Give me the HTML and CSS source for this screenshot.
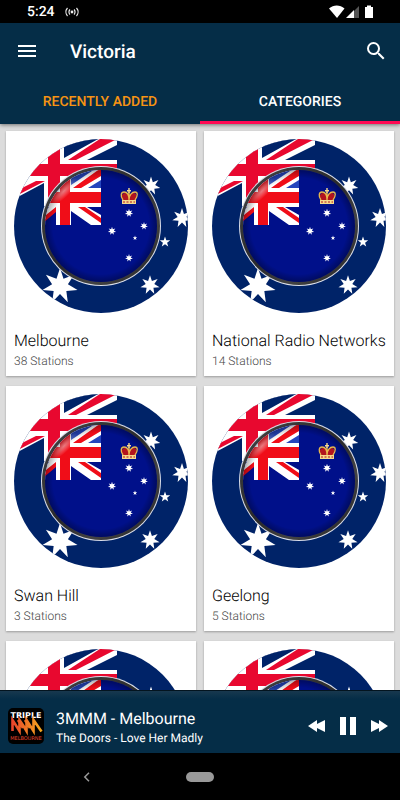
FILE: index.html
```html
<!DOCTYPE html>
<html lang="en">
<head>
  <meta charset="UTF-8">
  <meta name="viewport" content="width=device-width, initial-scale=1">
  <title>Victoria</title>
  <link rel="stylesheet" href="styles.css">
</head>
<body>
  <!-- shared artwork -->
  <svg class="defs" width="0" height="0" aria-hidden="true">
    <defs>
      <clipPath id="outer"><circle cx="87" cy="87" r="87"/></clipPath>
      <clipPath id="inner"><circle cx="87" cy="87" r="56"/></clipPath>
      <radialGradient id="shade">
        <stop offset="0.86" stop-color="#000" stop-opacity="0"/>
        <stop offset="1" stop-color="#000" stop-opacity="0.3"/>
      </radialGradient>
      <radialGradient id="shine">
        <stop offset="0" stop-color="#fff" stop-opacity="0.45"/>
        <stop offset="1" stop-color="#fff" stop-opacity="0"/>
      </radialGradient>
      <linearGradient id="rim" x1="0" y1="0" x2="1" y2="1">
        <stop offset="0" stop-color="#444"/>
        <stop offset="0.5" stop-color="#2a2a2a"/>
        <stop offset="0.7" stop-color="#444"/>
        <stop offset="1" stop-color="#222"/>
      </linearGradient>
      <linearGradient id="flame" x1="0" y1="0" x2="1" y2="0">
        <stop offset="0" stop-color="#e8452c"/>
        <stop offset="1" stop-color="#f6a91e"/>
      </linearGradient>
      <path id="star7" d="M0-10 1.95-4.05 7.82-6.23 4.39-1 9.75 2.23 3.52 2.81 4.34 9.01 0 4.5-4.34 9.01-3.52 2.81-9.75 2.23-4.39-1-7.82-6.23-1.95-4.05Z"/>
      <path id="star5" d="M0-10 2.35-3.24 9.51-3.09 3.8 1.24 5.88 8.09 0 4-5.88 8.09-3.8 1.24-9.51-3.09-2.35-3.24Z"/>
      <symbol id="flag" viewBox="0 0 174 174">
        <g clip-path="url(#outer)">
          <path fill="#002368" d="M0 0h174v174H0z"/>
          <path fill="#fff" d="M0 0h103v42H50v25H30V44L0 60z"/>
          <path fill="#002368" d="M50 8v11L86-1H60zM73 21 103 6v15z"/>
          <path fill="#e8082f" d="M0 25h34V0h12v25h57v12H46v30H34V37H0zM54 21h8l41-21v-4H92zM0 53l22-11h9L0 58z"/>
          <g fill="#fff">
            <use href="#star7" transform="translate(46 147) scale(1.8)"/>
            <use href="#star7" transform="translate(137 47) scale(.95)"/>
            <use href="#star7" transform="translate(168 79) scale(1)"/>
            <use href="#star7" transform="translate(136 146) scale(.98)"/>
            <use href="#star5" transform="translate(151 103) scale(.55)"/>
          </g>
        </g>
        <circle cx="87" cy="87" r="60" fill="#d9dde8"/>
        <circle cx="87" cy="87" r="59" fill="url(#rim)"/>
        <g clip-path="url(#inner)">
          <path fill="#00108a" d="M30 30h114v114H30z"/>
          <path fill="#fff" d="M30 30h57v56H30z"/>
          <path fill="#2545bd" d="M57 46V34l10-6h17zM74 49l13-8v8z"/>
          <path fill="#00108a" d="M73 68h14v8zM57 72v14h20zM42 71v15H24zM30 68h5l-5 4z"/>
          <path fill="#f00d18" d="M30 53h16V30h10v23h31v11H56v22H46V64H30zM59 49h8l20-12v-8zM64 68h7l16 11v5zM28 79l14-11v5L30 83z"/>
          <g fill="#fff">
            <use href="#star7" transform="translate(115 74) scale(.42)"/>
            <use href="#star7" transform="translate(130 87) scale(.4)"/>
            <use href="#star7" transform="translate(98 92) scale(.42)"/>
            <use href="#star7" transform="translate(115 119) scale(.4)"/>
            <use href="#star5" transform="translate(121 99) scale(.24)"/>
          </g>
          <!-- crown -->
          <path fill="#b3141e" d="M109 61c-2-4-1-7 2-7 2 0 3 1 4 2 1-1 3-2 5-2 3 0 3 4 1 7z"/>
          <path fill="none" stroke="#e9b74c" stroke-width="1.3" d="M109 61c-3-4-2-8 1-8 3 0 5 3 5 8 0-5 3-8 6-8s3 4 0 8M115 61v-8"/>
          <path fill="#f5d98b" d="M108 61h14v4h-14zM113 51h1.3v-2h1.4v2h1.3v1.4h-1.3V54h-1.4v-1.6H113z"/>
          <path stroke="#b3141e" stroke-dasharray="2 1.5" d="M109 63h12"/>
          <circle cx="87" cy="87" r="56" fill="url(#shade)"/>
          <ellipse cx="50" cy="52" rx="18" ry="6" fill="url(#shine)" transform="rotate(-45 50 52)"/>
        </g>
      </symbol>
    </defs>
  </svg>

  <div class="app">
    <div class="status">
      <span class="clock">5:24</span>
      <svg class="cast" width="14" height="10" viewBox="0 0 14 10" fill="none" stroke="#eee" stroke-width="1.2">
        <circle cx="7" cy="5" r="1.4" fill="#eee" stroke="none"/>
        <path d="M5 2.5a3.5 3.5 0 0 0 0 5M9 2.5a3.5 3.5 0 0 1 0 5M2.5 1a6 6 0 0 0 0 8M11.5 1a6 6 0 0 1 0 8"/>
      </svg>
      <svg class="signals" width="46" height="14" viewBox="0 0 46 14" fill="#fff">
        <path d="M0 3.5C4.5-.5 11-.5 15.5 3.5L8 13z"/>
        <path fill="#555" d="M24.5 6.5 30 1v12h-5.5z"/>
        <path d="M17 13l8-8v8z"/>
        <path d="M36 2h2V.5h4V2h2v11h-8z"/>
      </svg>
    </div>

    <header class="header">
      <div class="toolbar">
        <button class="icon-btn" aria-label="Menu">
          <svg width="24" height="24" viewBox="0 0 24 24" fill="#fff"><path d="M3 18h18v-2H3v2zm0-5h18v-2H3v2zm0-7v2h18V6H3z"/></svg>
        </button>
        <h1 class="title">Victoria</h1>
        <button class="icon-btn" aria-label="Search">
          <svg width="24" height="24" viewBox="0 0 24 24" fill="#fff"><path d="M15.5 14h-.79l-.28-.27A6.47 6.47 0 0 0 16 9.5 6.5 6.5 0 1 0 9.5 16c1.61 0 3.09-.59 4.23-1.57l.27.28v.79l5 4.99L20.49 19l-4.99-5zm-6 0C7.01 14 5 11.99 5 9.5S7.01 5 9.5 5 14 7.01 14 9.5 11.99 14 9.5 14z"/></svg>
        </button>
      </div>
      <nav class="tabs">
        <a href="#recent" class="tab recent">RECENTLY ADDED</a>
        <a href="#categories" class="tab active">CATEGORIES</a>
      </nav>
    </header>

    <main class="grid" id="categories">
      <a class="card" href="#melbourne">
        <svg class="flag" viewBox="0 0 174 174"><use href="#flag"/></svg>
        <h2 class="name">Melbourne</h2>
        <p class="count">38 Stations</p>
      </a>
      <a class="card" href="#national">
        <svg class="flag" viewBox="0 0 174 174"><use href="#flag"/></svg>
        <h2 class="name">National Radio Networks</h2>
        <p class="count">14 Stations</p>
      </a>
      <a class="card" href="#swan-hill">
        <svg class="flag" viewBox="0 0 174 174"><use href="#flag"/></svg>
        <h2 class="name">Swan Hill</h2>
        <p class="count">3 Stations</p>
      </a>
      <a class="card" href="#geelong">
        <svg class="flag" viewBox="0 0 174 174"><use href="#flag"/></svg>
        <h2 class="name">Geelong</h2>
        <p class="count">5 Stations</p>
      </a>
      <div class="card">
        <svg class="flag" viewBox="0 0 174 174"><use href="#flag"/></svg>
      </div>
      <div class="card">
        <svg class="flag" viewBox="0 0 174 174"><use href="#flag"/></svg>
      </div>
    </main>

    <footer class="player">
      <svg class="logo" width="36" height="36" viewBox="0 0 36 36">
        <rect width="36" height="36" rx="5" fill="#000"/>
        <text class="logo-top" x="18" y="10" text-anchor="middle">TRIPLE</text>
        <path fill="none" stroke="url(#flame)" stroke-width="2.6" d="M4.500 23V12l7 11V12l4 6 3 5V12l7 11V12l8 11.500M10 12l5 8M17 12l5 8"/>
        <text class="logo-bottom" x="18" y="32" text-anchor="middle">MELBOURNE</text>
      </svg>
      <div class="track">
        <p class="station">3MMM - Melbourne</p>
        <p class="song">The Doors - Love Her Madly</p>
      </div>
      <div class="controls">
        <button class="control" aria-label="Previous">
          <svg width="18" height="12" viewBox="0 0 18 12" fill="#fff"><path d="M0 6 9 0v4l8-4v12L9 8v4z"/></svg>
        </button>
        <button class="control" aria-label="Pause">
          <svg width="16" height="18" viewBox="0 0 16 18" fill="#fff"><path d="M0 0h6v18H0zM10 0h6v18h-6z"/></svg>
        </button>
        <button class="control" aria-label="Next">
          <svg width="18" height="12" viewBox="0 0 18 12" fill="#fff"><path d="M18 6 9 0v4L1 0v12l8-4v4z"/></svg>
        </button>
      </div>
    </footer>

    <div class="navbar">
      <button class="nav-btn" aria-label="Back">
        <svg width="8" height="10" viewBox="0 0 8 10" fill="none" stroke="#999" stroke-width="1.5"><path d="M6 .8 1.8 5 6 9.2"/></svg>
      </button>
      <button class="nav-btn" aria-label="Home"><span class="pill"></span></button>
    </div>
  </div>
</body>
</html>
```

FILE: styles.css
```css
* {
  box-sizing: border-box;
}

body {
  margin: 0;
  background: #000;
  font-family: Roboto, "Liberation Sans", sans-serif;
  text-rendering: geometricPrecision;
}

h1, h2, p {
  margin: 0;
  font-weight: 400;
}

a {
  color: inherit;
  text-decoration: none;
}

button {
  padding: 0;
  border: 0;
  background: none;
}

svg {
  display: block;
}

.defs {
  position: absolute;
}

.app {
  display: flex;
  flex-direction: column;
  height: 100vh;
}

.status {
  display: flex;
  align-items: center;
  padding: 1px 25px 0 27px;
  color: #fff;
}

.clock {
  font-size: 14px;
  font-weight: 500;
  line-height: 22px;
}

.cast {
  margin-left: 10px;
}

.signals {
  margin-left: auto;
}

.header {
  position: relative;
  background: #052d47;
  color: #fff;
  box-shadow: 0 1px 4px rgba(0, 0, 0, 0.5);
}

.toolbar {
  display: flex;
  align-items: center;
  padding: 0 8px 0 11px;
  height: 56px;
}

.icon-btn {
  padding: 0 4px;
}

.title {
  flex: 1;
  padding-left: 27px;
  font-size: 19px;
  font-weight: 500;
}

.tabs {
  display: grid;
  grid-template-columns: 1fr 1fr;
}

.tab {
  padding: 12px 0 7px;
  border-bottom: 3px solid transparent;
  font-size: 14px;
  font-weight: 500;
  line-height: 23px;
  text-align: center;
}

.recent {
  color: #f79413;
}

.active {
  border-bottom-color: #ff0a54;
}

.grid {
  flex: 1;
  min-height: 0;
  display: grid;
  grid-template-columns: 1fr 1fr;
  align-content: start;
  gap: 10px 8px;
  padding: 7px 6px;
  overflow: hidden;
  background: #dcdcdc;
}

.card {
  min-width: 0;
  padding: 8px;
  background: #fff;
  box-shadow: 0 1px 2px rgba(0, 0, 0, 0.3);
}

.flag {
  width: 100%;
  height: auto;
}

.name {
  margin-top: 18px;
  color: #000;
  font-size: 16px;
  font-weight: 300;
  line-height: 20px;
  white-space: nowrap;
}

.count {
  margin-top: 3px;
  color: #444;
  font-size: 12px;
  font-weight: 300;
  line-height: 14px;
}

.player {
  display: flex;
  align-items: center;
  padding: 10px 12px 2px 8px;
  border-top: 1px solid #03141f;
  background: linear-gradient(#18384e, #052d47 8px);
  color: #fff;
}

.logo-top {
  fill: #fff;
  font: bold 8px "DejaVu Sans", sans-serif;
}

.logo-bottom {
  fill: #e8452c;
  font: 5px "DejaVu Sans", sans-serif;
}

.track {
  flex: 1;
  padding: 8px 0 4px 12px;
}

.station {
  font-size: 16px;
  line-height: 20px;
}

.song {
  font-size: 12px;
  line-height: 18px;
}

.controls {
  display: flex;
  align-items: center;
  gap: 14px;
}

.navbar {
  display: grid;
  grid-template-columns: 1fr 1fr 1fr;
  align-items: center;
  padding: 0 30px;
  height: 47px;
}

.nav-btn {
  justify-self: center;
}

.pill {
  display: block;
  width: 28px;
  height: 10px;
  border-radius: 5px;
  background: #999;
}
```
